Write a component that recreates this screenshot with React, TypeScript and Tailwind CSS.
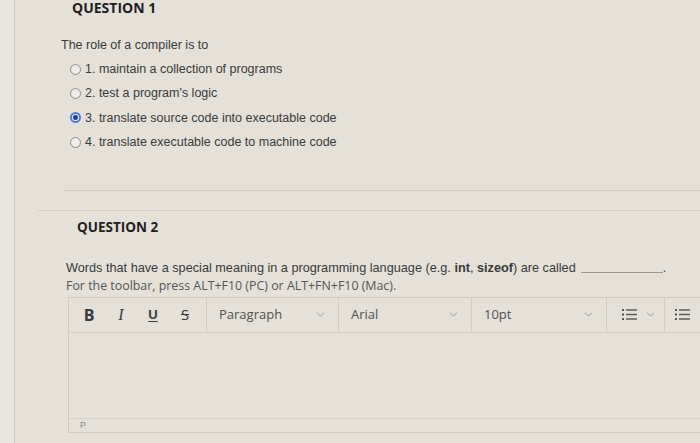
import { ChevronDown } from 'lucide-react'

const options = [
  { text: '1. maintain a collection of programs', checked: false },
  { text: "2. test a program's logic", checked: false },
  { text: '3. translate source code into executable code', checked: true },
  { text: '4. translate executable code to machine code', checked: false },
]

function Radio({ checked }: { checked: boolean }) {
  if (checked) {
    return (
      <span className="w-[11px] h-[11px] rounded-full border-[2px] border-[#4a7be0] bg-[#f4f4f4] flex items-center justify-center shrink-0">
        <span className="w-[5px] h-[5px] rounded-full bg-[#1d3f9a]" />
      </span>
    )
  }
  return <span className="w-[11px] h-[11px] rounded-full border border-[#8c8c8c] bg-[#eeece8] shrink-0" />
}

function ListIcon() {
  return (
    <svg width="15" height="13" viewBox="0 0 15 13" className="text-[#555]">
      <rect x="0" y="1" width="2" height="2" fill="currentColor" />
      <rect x="4" y="1.3" width="11" height="1.4" fill="currentColor" />
      <rect x="0" y="5.5" width="2" height="2" fill="currentColor" />
      <rect x="4" y="5.8" width="11" height="1.4" fill="currentColor" />
      <rect x="0" y="10" width="2" height="2" fill="currentColor" />
      <rect x="4" y="10.3" width="11" height="1.4" fill="currentColor" />
    </svg>
  )
}

function Dropdown({ label, width }: { label: string; width: string }) {
  return (
    <div className={`${width} h-full flex items-center justify-between pl-[12px] pr-[11px] border-r border-[#d2cec6] shrink-0`}>
      <span className="text-[13px] text-[#505050] font-['Open_Sans',sans-serif]">{label}</span>
      <ChevronDown size={13} strokeWidth={1.5} className="text-[#8a8a8a]" />
    </div>
  )
}

export default function App() {
  return (
    <div className="w-[700px] h-[443px] overflow-hidden bg-[#e5e1d9] flex font-['Liberation_Sans',Arial,sans-serif] text-[#3a3a3a]">
      {/* left gutter */}
      <div className="w-[15px] shrink-0 border-r border-[#cdc8be] bg-[#e8e5df]" />

      <div className="flex-1 min-w-0 flex flex-col">
        {/* Question 1 */}
        <div className="pl-[57px] h-[16px] leading-[16px] text-[14px] font-bold text-[#1f1f1f] font-['Open_Sans',sans-serif]">
          QUESTION 1
        </div>
        <div className="pl-[46px] mt-[20px] h-[18px] leading-[18px] text-[12.5px]">The role of a compiler is to</div>
        <div className="pl-[55px] mt-[3px] flex flex-col">
          {options.map((o) => (
            <div key={o.text} className="h-[24.4px] flex items-center gap-[4px]">
              <Radio checked={o.checked} />
              <span className="text-[12.5px]">{o.text}</span>
            </div>
          ))}
        </div>

        {/* separators */}
        <div className="ml-[48px] mt-[35px] border-t border-[#cfcbc3]" />
        <div className="ml-[23px] mt-[19px] border-t border-[#d3cfc7]" />

        {/* Question 2 */}
        <div className="pl-[62px] mt-[7px] h-[18px] leading-[18px] text-[13.5px] font-bold text-[#1f1f1f] font-['Open_Sans',sans-serif]">
          QUESTION 2
        </div>
        <div className="pl-[51px] mt-[23px] h-[18px] leading-[18px] text-[12.7px] flex items-end whitespace-nowrap">
          <span>
            Words that have a special meaning in a programming language (e.g. <b>int</b>, <b>sizeof</b>) are called
          </span>
          <span className="inline-block w-[82px] ml-[5px] mb-[4px] border-b border-[#9c9890]" />
          <span>.</span>
        </div>
        <div className="pl-[51px] h-[18px] leading-[18px] text-[12.4px] text-[#555] font-['Open_Sans',sans-serif] whitespace-nowrap">
          For the toolbar, press ALT+F10 (PC) or ALT+FN+F10 (Mac).
        </div>

        {/* editor */}
        <div className="ml-[53px] mt-[2px] mr-[-20px] border border-[#d0ccc4] flex flex-col">
          <div className="h-[35px] flex items-center border-b border-[#d0ccc4]">
            <div className="h-full flex items-center pl-[4px] pr-[5px] border-r border-[#d2cec6] shrink-0 text-[#3a3a3a]">
              <span className="w-[32px] text-center text-[16px] font-bold font-['Open_Sans',sans-serif]">B</span>
              <span className="w-[32px] text-center text-[16px] italic font-['Liberation_Serif',serif]">I</span>
              <span className="w-[32px] text-center text-[13px] font-bold underline underline-offset-2">U</span>
              <span className="w-[32px] text-center text-[15px] line-through font-['Open_Sans',sans-serif]">S</span>
            </div>
            <Dropdown label="Paragraph" width="w-[132px]" />
            <Dropdown label="Arial" width="w-[133px]" />
            <Dropdown label="10pt" width="w-[135px]" />
            <div className="w-[58px] h-full flex items-center justify-between pl-[15px] pr-[7px] border-r border-[#d2cec6] shrink-0">
              <ListIcon />
              <ChevronDown size={13} strokeWidth={1.5} className="text-[#8a8a8a]" />
            </div>
            <div className="h-full flex items-center pl-[10px]">
              <ListIcon />
            </div>
          </div>
          <div className="h-[85px]" />
          <div className="h-[14px] border-t border-[#d6d2ca] pl-[11px] text-[9px] leading-[13px] text-[#8a8a8a]">P</div>
        </div>
      </div>
    </div>
  )
}
